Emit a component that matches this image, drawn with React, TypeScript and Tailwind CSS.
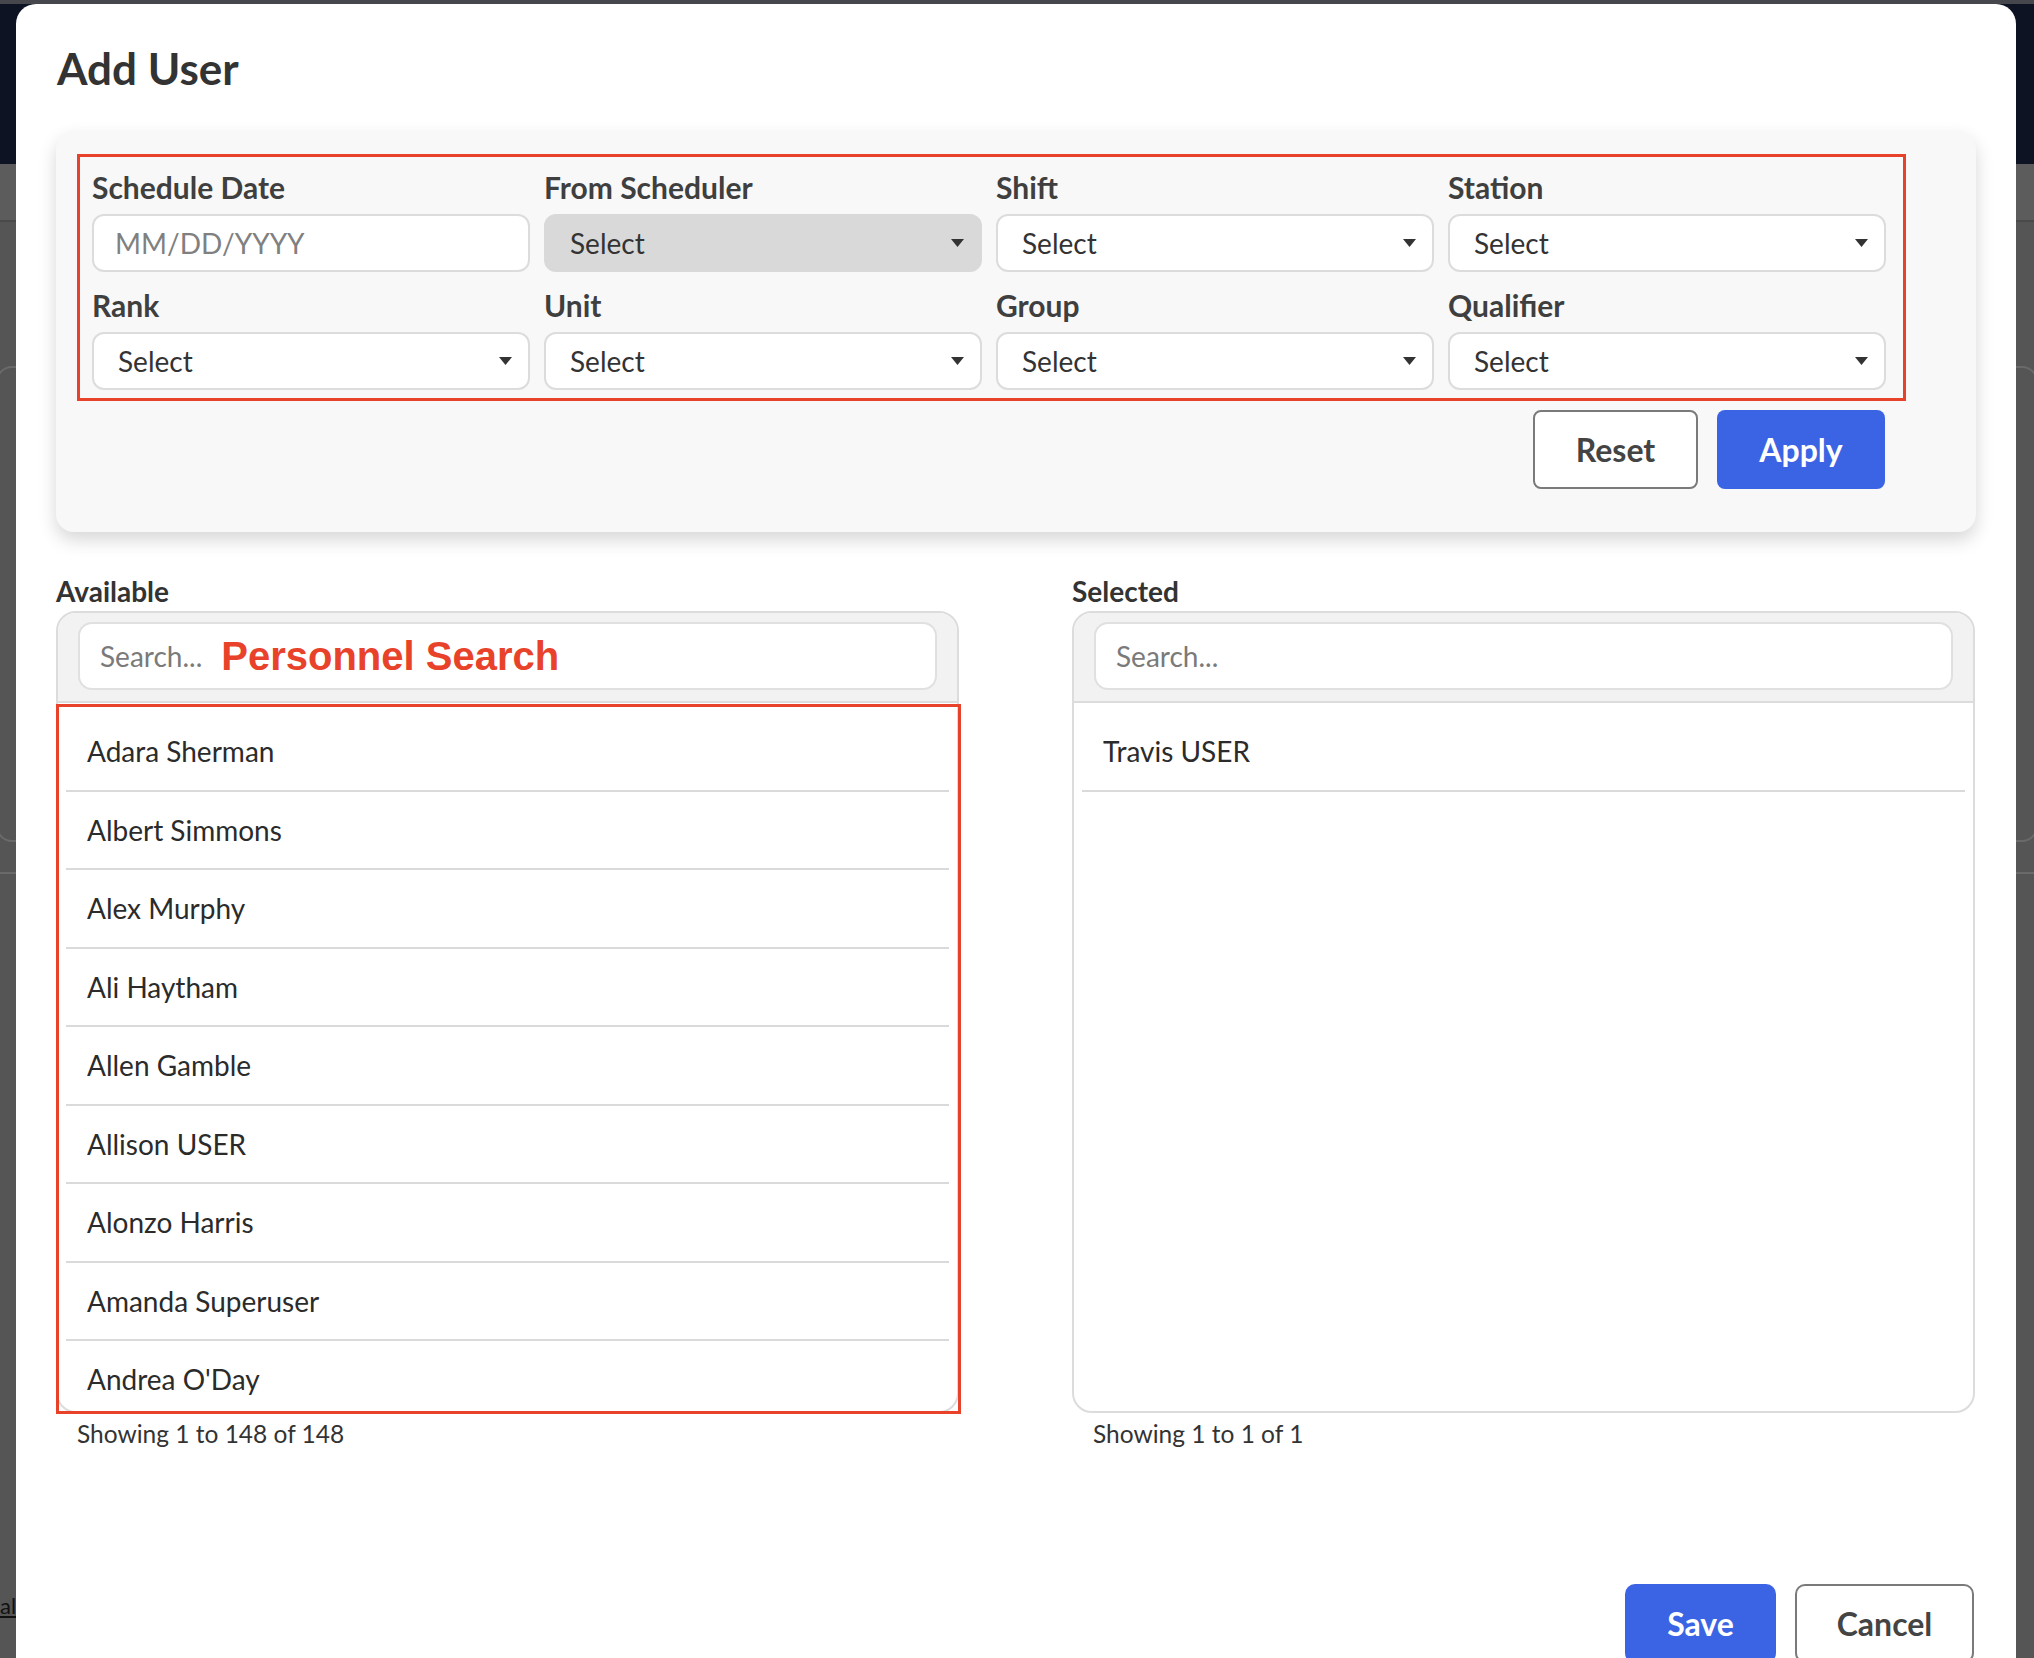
import React from "react";

const available = [
  "Adara Sherman",
  "Albert Simmons",
  "Alex Murphy",
  "Ali Haytham",
  "Allen Gamble",
  "Allison USER",
  "Alonzo Harris",
  "Amanda Superuser",
  "Andrea O'Day",
];

const selected = ["Travis USER"];

function Caret() {
  return (
    <svg width="13" height="8" viewBox="0 0 13 8" className="shrink-0">
      <path d="M0 0 L13 0 L6.5 8 Z" fill="#333333" />
    </svg>
  );
}

function Field({ label, children }: { label: string; children: React.ReactNode }) {
  return (
    <div className="flex flex-col">
      <span className="text-[30px] leading-[36px] font-bold text-[#3f3f3f]">{label}</span>
      <div className="mt-[9px]">{children}</div>
    </div>
  );
}

function SelectBox({ disabled }: { disabled?: boolean }) {
  return (
    <div
      className={
        disabled
          ? "h-[58px] rounded-[12px] border-2 border-[#d9d9d9] bg-[#d9d9d9] pl-[24px] pr-[16px] flex items-center justify-between"
          : "h-[58px] rounded-[12px] border-2 border-[#dcdcdc] bg-white pl-[24px] pr-[16px] flex items-center justify-between"
      }
    >
      <span className="text-[28px] text-[#333333]">Select</span>
      <Caret />
    </div>
  );
}

function ListPanel({
  title,
  items,
  footer,
  marked,
}: {
  title: string;
  items: string[];
  footer: string;
  marked?: boolean;
}) {
  return (
    <div className="flex flex-col">
      <span className="text-[28px] leading-[34px] font-bold text-[#333333]">{title}</span>
      <div className="relative mt-[3px]">
        <div className="h-[802px] rounded-[20px] border-2 border-[#dcdcdc] overflow-hidden flex flex-col bg-white">
          <div className="bg-[#f2f2f2] border-b-2 border-[#dcdcdc] px-[20px] pt-[9px] pb-[11px]">
            <div className="h-[68px] rounded-[14px] border-2 border-[#e0e0e0] bg-white pl-[20px] flex items-center gap-[19px]">
              <span className="text-[28px] text-[#7a7a7a]">Search...</span>
              {marked && (
                <span className="font-['Liberation_Sans',Arial,sans-serif] font-bold text-[40px] text-[#e8432a] leading-none">
                  Personnel Search
                </span>
              )}
            </div>
          </div>
          <div className="flex-1 overflow-hidden px-[8px] pt-[10px]">
            {items.map((name) => (
              <div
                key={name}
                className="h-[78.5px] border-b-2 border-[#dadada] pl-[21px] flex items-center text-[28px] text-[#2b2b2b]"
              >
                {name}
              </div>
            ))}
          </div>
        </div>
        {marked && (
          <div className="absolute left-0 -right-[2px] top-[93px] -bottom-[1px] border-[3px] border-[#e8432a] pointer-events-none" />
        )}
      </div>
      <span className="mt-[5px] pl-[21px] text-[24.5px] leading-[32px] text-[#333333]">{footer}</span>
    </div>
  );
}

export default function App() {
  return (
    <div className="relative h-screen w-full overflow-hidden flex flex-col bg-[#555555] font-['Lato',sans-serif]">
      {/* page behind the dialog */}
      <div className="h-[4px] bg-[#45474d]" />
      <div className="h-[160px] bg-[#0d1322]" />
      <div className="h-[58px] bg-[#5c5c5c] border-b-2 border-[#4a4a4a]" />
      <div className="mt-[144px] h-[476px] mx-[-4px] rounded-[16px] border-2 border-[#6a6a6a]" />
      <div className="mt-[30px] h-[2px] bg-[#6a6a6a]" />
      <div className="mt-auto mb-[36px] text-[22px] text-[#111] underline">ali</div>

      {/* dialog */}
      <div className="absolute left-[16px] top-[4px] w-[2000px] h-[1700px] rounded-t-[20px] bg-white px-[40px] pt-[38px]">
        <h1 className="pl-[1px] text-[44px] leading-[52px] font-bold text-[#333333]">Add User</h1>

        <div className="mt-[37px] rounded-[18px] bg-[#f8f8f8] shadow-[0_8px_18px_rgba(0,0,0,0.16)] pl-[21px] pr-[70px] pt-[23px] pb-[43px]">
          <div className="border-[3px] border-[#e8432a] pl-[12px] pr-[17px] pt-[12px] pb-[8px]">
            <div className="grid grid-cols-4 gap-x-[14px] gap-y-[15px]">
              <Field label="Schedule Date">
                <input
                  placeholder="MM/DD/YYYY"
                  className="h-[58px] w-full rounded-[12px] border-2 border-[#dcdcdc] bg-white pl-[21px] text-[28px] text-[#333] placeholder:text-[#808080] outline-none"
                />
              </Field>
              <Field label="From Scheduler">
                <SelectBox disabled />
              </Field>
              <Field label="Shift">
                <SelectBox />
              </Field>
              <Field label="Station">
                <SelectBox />
              </Field>
              <Field label="Rank">
                <SelectBox />
              </Field>
              <Field label="Unit">
                <SelectBox />
              </Field>
              <Field label="Group">
                <SelectBox />
              </Field>
              <Field label="Qualifier">
                <SelectBox />
              </Field>
            </div>
          </div>
          <div className="mt-[9px] mr-[21px] flex justify-end gap-[19px]">
            <button className="h-[79px] w-[165px] rounded-[8px] border-2 border-[#7a7a7a] bg-white text-[32px] font-bold text-[#444444]">
              Reset
            </button>
            <button className="h-[79px] w-[168px] rounded-[8px] bg-[#3a64e3] text-[32px] font-bold text-white">
              Apply
            </button>
          </div>
        </div>

        <div className="mt-[42px] grid grid-cols-[903px_903px] gap-x-[113px]">
          <ListPanel title="Available" items={available} footer="Showing 1 to 148 of 148" marked />
          <ListPanel title="Selected" items={selected} footer="Showing 1 to 1 of 1" />
        </div>

        <div className="mt-[134px] flex justify-end gap-[19px] pr-[2px]">
          <button className="h-[79px] w-[151px] rounded-[10px] bg-[#3a64e3] text-[32px] font-bold text-white">
            Save
          </button>
          <button className="h-[79px] w-[179px] rounded-[10px] border-2 border-[#7a7a7a] bg-white text-[32px] font-bold text-[#444444]">
            Cancel
          </button>
        </div>
      </div>
    </div>
  );
}
